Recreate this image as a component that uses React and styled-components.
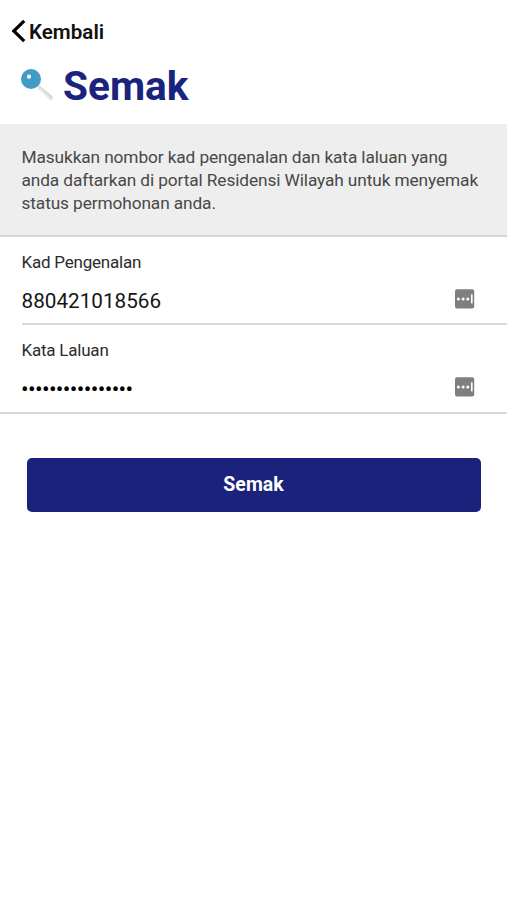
import React from "react";
import styled, { createGlobalStyle } from "styled-components";

const GlobalStyle = createGlobalStyle`
  *, *::before, *::after { box-sizing: border-box; }
  body { margin: 0; background: #fff; font-family: Roboto, "Liberation Sans", sans-serif; }
`;

const Page = styled.main`
  min-height: 900px;
  background: #fff;
  overflow: hidden;
`;

const Header = styled.header`
  height: 124px;
  display: flex;
  flex-direction: column;
`;

const BackButton = styled.button`
  display: flex;
  align-items: center;
  height: 28px;
  margin: 17px 0 0 11px;
  padding: 0;
  border: 0;
  background: none;
  color: #111;
  font: 600 20.6px/28px Roboto, sans-serif;
  cursor: pointer;

  svg { margin: -1px 3px 0 0; }
`;

const BackLabel = styled.span`
  padding-top: 1px;
`;

const Title = styled.h1`
  display: flex;
  align-items: center;
  margin: 17px 0 0 20px;
  height: 48px;
  color: #1a237e;
  font-size: 40.6px;
  font-weight: 700;
  line-height: 48px;

  svg { margin: -5px 9px 0 0; }
`;

const Notice = styled.p`
  height: 113px;
  margin: 0;
  padding: 22.4px 22px 0 21.5px;
  background: #eee;
  border-bottom: 2px solid #d6d6d6;
  color: #484848;
  font-size: 17.3px;
  letter-spacing: -0.11px;
  line-height: 23px;
  white-space: nowrap;
`;

const Form = styled.form`
  border-bottom: 2px solid #dadada;
`;

const Field = styled.div`
  height: ${(p) => (p.$last ? "87px" : "88px")};
  margin-left: 21.5px;
  padding-top: 14px;
  border-bottom: ${(p) => (p.$last ? "0" : "2px solid #dadada")};
`;

const Label = styled.div`
  color: #2b2b2b;
  font-size: 17px;
  letter-spacing: -0.22px;
  line-height: 22px;
`;

const InputRow = styled.div`
  display: flex;
  align-items: center;
  justify-content: space-between;
  height: 24px;
  margin-top: 14px;
  padding-right: 32.5px;
`;

const Value = styled.span`
  padding-top: 4px;
  color: #151515;
  font-size: 20.7px;
  line-height: 24px;
`;

const Mask = styled(Value)`
  padding-top: 6px;
  margin-left: -0.5px;
  color: #000;
  font-size: 22.6px;
  letter-spacing: -0.65px;
`;

const Submit = styled.button`
  display: block;
  width: 454px;
  height: 54px;
  margin: 44px 0 0 26.5px;
  padding: 0;
  border: 0;
  border-radius: 5px;
  background: #1b227c;
  color: #fff;
  font: 700 19.5px/54px Roboto, sans-serif;
  cursor: pointer;
`;

const ChevronIcon = () => (
  <svg width="15" height="24" viewBox="0 0 15 24" fill="none">
    <path d="M13.2 1.8 2.8 12l10.4 10.2" stroke="#000" strokeWidth="3.2" />
  </svg>
);

const MagnifierIcon = () => (
  <svg width="34" height="34" viewBox="0 0 34 34">
    <defs>
      <linearGradient id="handle" x1="23" y1="27" x2="27" y2="23" gradientUnits="userSpaceOnUse">
        <stop offset="0" stopColor="#f4f4f4" />
        <stop offset="0.5" stopColor="#dedede" />
        <stop offset="1" stopColor="#bcbcbc" />
      </linearGradient>
    </defs>
    <path d="M19 18 32.5 29.5V33H29.5L16 21Z" fill="url(#handle)" />
    <circle cx="11" cy="12" r="10" fill="#429cc6" />
    <circle cx="9" cy="9.7" r="2.1" fill="#fff" />
  </svg>
);

const CredentialIcon = () => (
  <svg width="20" height="20" viewBox="0 0 20 20">
    <rect x="0" y="0.3" width="19.2" height="19.2" rx="2" fill="#7f7f7f" />
    <g fill="#fff">
      <circle cx="3.4" cy="10" r="1.5" />
      <circle cx="8.1" cy="10" r="1.5" />
      <circle cx="12.8" cy="10" r="1.5" />
      <rect x="16" y="5.4" width="1.6" height="9" />
    </g>
  </svg>
);

export default function App() {
  return (
    <Page>
      <GlobalStyle />
      <Header>
        <BackButton type="button">
          <ChevronIcon />
          <BackLabel>Kembali</BackLabel>
        </BackButton>
        <Title>
          <MagnifierIcon />
          Semak
        </Title>
      </Header>
      <Notice>
        Masukkan nombor kad pengenalan dan kata laluan yang
        <br />
        anda daftarkan di portal Residensi Wilayah untuk menyemak
        <br />
        status permohonan anda.
      </Notice>
      <Form>
        <Field>
          <Label>Kad Pengenalan</Label>
          <InputRow>
            <Value>880421018566</Value>
            <CredentialIcon />
          </InputRow>
        </Field>
        <Field $last>
          <Label>Kata Laluan</Label>
          <InputRow>
            <Mask>{"•".repeat(16)}</Mask>
            <CredentialIcon />
          </InputRow>
        </Field>
      </Form>
      <Submit type="button">Semak</Submit>
    </Page>
  );
}
